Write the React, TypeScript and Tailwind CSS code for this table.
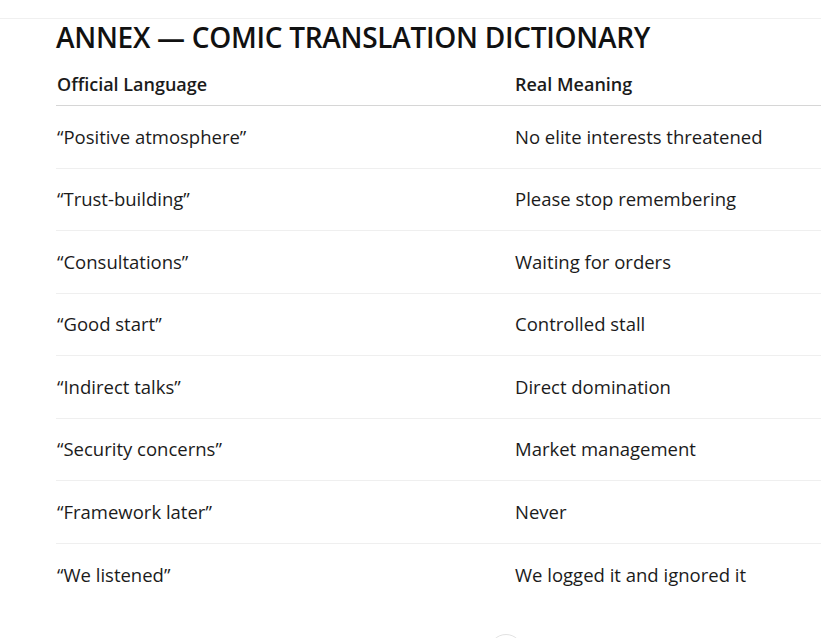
import React from "react";

const rows = [
  { official: "“Positive atmosphere”", real: "No elite interests threatened" },
  { official: "“Trust-building”", real: "Please stop remembering" },
  { official: "“Consultations”", real: "Waiting for orders" },
  { official: "“Good start”", real: "Controlled stall" },
  { official: "“Indirect talks”", real: "Direct domination" },
  { official: "“Security concerns”", real: "Market management" },
  { official: "“Framework later”", real: "Never" },
  { official: "“We listened”", real: "We logged it and ignored it" },
];

export default function App() {
  return (
    <div
      className="w-full h-[638px] overflow-hidden bg-white text-[#1b1b1b]"
      style={{ fontFamily: "'Open Sans', 'Noto Sans', sans-serif" }}
    >
      {/* top bar */}
      <div className="h-[19px] border-b border-[#f0f0f0]" />

      <div className="pl-[56px]">
        <h2 className="h-[36px] leading-[36px] text-[28px] font-semibold tracking-[-0.28px] text-[#111]">
          ANNEX — COMIC TRANSLATION DICTIONARY
        </h2>

        <div className="w-[900px]">
          {/* header */}
          <div className="flex items-end h-[51px] pb-[9px] border-b border-[#d6d6d6] text-[18px] font-semibold leading-[24px]">
            <div className="w-[459px] pl-px">Official Language</div>
            <div>Real Meaning</div>
          </div>

          {rows.map((r, i) => (
            <div
              key={r.official}
              className={
                "flex items-center h-[62.5px] text-[18.5px] " +
                (i < rows.length - 1 ? "border-b border-[#efefef]" : "")
              }
            >
              <div className="w-[459px] pl-px">{r.official}</div>
              <div>{r.real}</div>
            </div>
          ))}
        </div>
      </div>

      {/* partially visible round button */}
      <div className="flex justify-center pl-[190px] pt-[28px]">
        <div className="w-[34px] h-[34px] rounded-full border border-[#e2e2e2] bg-white" />
      </div>
    </div>
  );
}
